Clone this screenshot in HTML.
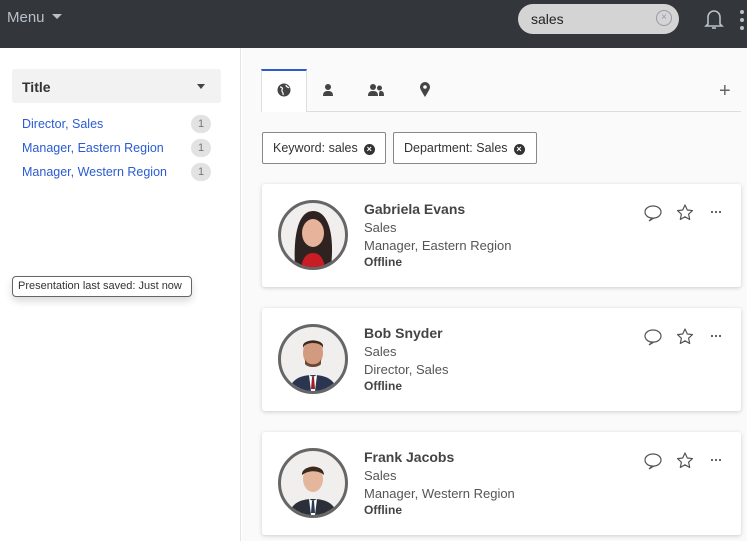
<!DOCTYPE html>
<html><head><style>
*{box-sizing:border-box;margin:0;padding:0}
body{width:747px;height:541px;overflow:hidden;background:#fff;font-family:"Liberation Sans","DejaVu Sans",sans-serif;position:relative;color:#444}
.hdr{position:absolute;left:0;top:0;width:747px;height:48px;background:#33373c}
.menu{position:absolute;left:7px;top:9px;color:#b8c0c8;font-size:15px}
.menu:after{content:"";display:inline-block;margin-left:7px;border:5px solid transparent;border-top:5px solid #b8c0c8;border-bottom:0;vertical-align:3px}
.search{position:absolute;left:518px;top:4px;width:161px;height:30px;border-radius:15px;background:#d4d4d4;font-size:14px;color:#222;padding:7px 0 0 13px}
.xc{position:absolute;right:7px;top:6px;width:16px;height:16px;border-radius:50%;border:1.5px solid #99a;color:#99a;font-size:10px;line-height:13px;text-align:center}
.left{position:absolute;left:0;top:48px;width:241px;height:493px;border-right:1px solid #e4e4e4;background:#fff}
.right{position:absolute;left:242px;top:48px;width:505px;height:493px;background:#fafafa}
.ttl{position:absolute;left:12px;top:69px;width:209px;height:34px;background:#f2f2f2;border-radius:3px;font-size:14px;font-weight:bold;color:#333;padding:10px 10px}
.ttl:after{content:"";position:absolute;right:16px;top:15px;border:4.5px solid transparent;border-top:5px solid #444;border-bottom:0}
.fi{position:absolute;left:22px;font-size:12.5px;color:#2a5bd0}
.cnt{position:absolute;left:191px;width:20px;height:18px;border-radius:9px;background:#e2e2e2;color:#777;font-size:11px;text-align:center;line-height:18px}
.tip{position:absolute;left:12px;top:276px;width:180px;height:21px;border:1px solid #666;border-radius:4px;background:#fff;font-size:11px;color:#333;padding:3px 5px;box-shadow:0 4px 8px rgba(0,0,0,.15);white-space:nowrap}
.tabs{position:absolute;left:261px;top:111px;width:480px;border-top:1px solid #ddd}
.tab1{position:absolute;left:261px;top:69px;width:46px;height:43px;border-top:2px solid #2a5bd0;border-left:1px solid #ddd;border-right:1px solid #ddd;background:#fff}
.chip{position:absolute;top:132px;height:32px;border:1px solid #888;border-radius:2px;background:#fff;font-size:12.5px;color:#333;padding:8px 10px;white-space:nowrap}
.chip i{display:inline-block;width:11px;height:11px;border-radius:50%;background:#333;color:#fff;font-size:9px;line-height:11px;text-align:center;font-style:normal;font-weight:bold;margin-left:6px;vertical-align:0}
.card{position:absolute;left:262px;width:479px;height:103px;background:#fff;border-radius:3px;box-shadow:0 1px 4px rgba(0,0,0,.18)}
.av{position:absolute;left:16px;top:16px;width:70px;height:70px;border-radius:50%;border:3px solid #666;overflow:hidden;background:#f1eeee}
.nm{position:absolute;left:102px;top:17px;font-size:14px;font-weight:bold;color:#444}
.ln{position:absolute;left:102px;font-size:13px;color:#555}
.off{position:absolute;left:102px;top:71px;font-size:12px;font-weight:bold;color:#444}
.ic{position:absolute;top:20px}
</style></head><body>
<div class="hdr"><div class="menu">Menu</div>
<div class="search">sales<div class="xc">×</div></div>
<svg style="position:absolute;left:704px;top:8px" width="20" height="22" viewBox="0 0 20 22"><path d="M4 16V9a6 6 0 0 1 12 0v7l2 2H2z" fill="none" stroke="#b8c0c8" stroke-width="1.6"/><path d="M8 20h4" stroke="#b8c0c8" stroke-width="1.6"/></svg>
<div style="position:absolute;left:740px;top:10px;width:4px;height:4px;border-radius:2px;background:#b8c0c8;box-shadow:0 8px 0 #b8c0c8,0 16px 0 #b8c0c8"></div>
</div>
<div class="left"></div><div class="right"></div>
<div class="ttl">Title</div>
<div class="fi" style="top:117px">Director, Sales</div><div class="cnt" style="top:115px">1</div>
<div class="fi" style="top:141px">Manager, Eastern Region</div><div class="cnt" style="top:139px">1</div>
<div class="fi" style="top:165px">Manager, Western Region</div><div class="cnt" style="top:163px">1</div>
<div class="tip">Presentation last saved: Just now</div>
<div class="tabs"></div><div class="tab1"></div>
<svg style="position:absolute;left:277px;top:83px" width="14" height="14" viewBox="0 0 14 14"><circle cx="7" cy="7" r="6.5" fill="#444"/><path d="M3 4c2 0 3 1 2 3s2 2 1 5M9 2c0 2 2 2 3 3" stroke="#fff" stroke-width="1.2" fill="none"/></svg>
<svg style="position:absolute;left:322px;top:83px" width="12" height="14" viewBox="0 0 12 14"><circle cx="6" cy="4" r="3" fill="#444"/><path d="M1 13c0-4 2-5 5-5s5 1 5 5z" fill="#444"/></svg>
<svg style="position:absolute;left:367px;top:83px" width="18" height="14" viewBox="0 0 18 14"><circle cx="6" cy="4" r="3" fill="#444"/><path d="M1 13c0-4 2-5 5-5s5 1 5 5z" fill="#444"/><circle cx="12.5" cy="5" r="2.5" fill="#444"/><path d="M12 13c0-3 0-4 1-5 3 0 4 1 4 5z" fill="#444"/></svg>
<svg style="position:absolute;left:419px;top:81px" width="12" height="16" viewBox="0 0 12 16"><path d="M6 16C3 11 1 8 1 6a5 5 0 0 1 10 0c0 2-2 5-5 10z" fill="#444"/><circle cx="6" cy="6" r="1.8" fill="#fff"/></svg>
<div style="position:absolute;left:719px;top:80px;font-size:20px;color:#666;font-weight:300">+</div>
<div class="chip" style="left:262px;width:124px">Keyword: sales<i>×</i></div>
<div class="chip" style="left:393px;width:144px">Department: Sales<i>×</i></div>

<div class="card" style="top:184px">
<div class="av"><svg width="64" height="64" viewBox="0 0 64 64"><path d="M14 64C12 30 18 8 32 8s22 20 18 56z" fill="#2e2320"/><ellipse cx="32" cy="30" rx="11" ry="14" fill="#e7b49b"/><path d="M20 64c2-10 6-14 12-14s10 4 12 14z" fill="#c81d25"/></svg></div>
<div class="nm">Gabriela Evans</div><div class="ln" style="top:36px">Sales</div><div class="ln" style="top:54px">Manager, Eastern Region</div><div class="off">Offline</div>
</div>
<div class="card" style="top:308px">
<div class="av"><svg width="64" height="64" viewBox="0 0 64 64"><ellipse cx="32" cy="26" rx="10" ry="13" fill="#d29b7f"/><path d="M22 22c0-8 20-8 20 0v-4c-2-6-18-6-20 0z" fill="#3a2a20"/><path d="M24 32c2 7 14 7 16 0v5c-3 4-13 4-16 0z" fill="#6b4a35"/><path d="M8 64c2-12 12-16 24-16s22 4 24 16z" fill="#2a3550"/><path d="M28 48l4 2 4-2-2 16h-4z" fill="#fff"/><path d="M31 50h2l1 12h-4z" fill="#a01c2a"/></svg></div>
<div class="nm">Bob Snyder</div><div class="ln" style="top:36px">Sales</div><div class="ln" style="top:54px">Director, Sales</div><div class="off">Offline</div>
</div>
<div class="card" style="top:432px">
<div class="av"><svg width="64" height="64" viewBox="0 0 64 64"><ellipse cx="32" cy="28" rx="10" ry="13" fill="#e4b69c"/><path d="M21 24c-1-10 22-12 22 0-4-4-14-6-22 0z" fill="#3a2a20"/><path d="M8 64c2-12 12-16 24-16s22 4 24 16z" fill="#2a2f3a"/><path d="M28 48l4 2 4-2-2 16h-4z" fill="#fff"/><path d="M31 50h2l1 12h-4z" fill="#2a3a55"/></svg></div>
<div class="nm">Frank Jacobs</div><div class="ln" style="top:36px">Sales</div><div class="ln" style="top:54px">Manager, Western Region</div><div class="off">Offline</div>
</div>

<svg width="0" height="0" style="position:absolute"><defs>
<g id="acts"><path d="M391 2c-5 0-8 3-8 6s3 6 7 6l-3 3 5-3c4 0 7-3 7-6s-3-6-8-6z" fill="none" stroke="#555" stroke-width="1.2"/><path d="M423 1l2.3 5 5.2.6-3.9 3.6 1.1 5.3-4.7-2.7-4.7 2.7 1.1-5.3-3.9-3.6 5.2-.6z" fill="none" stroke="#555" stroke-width="1.2" stroke-linejoin="round"/><circle cx="450" cy="8" r="1.1" fill="#555"/><circle cx="454" cy="8" r="1.1" fill="#555"/><circle cx="458" cy="8" r="1.1" fill="#555"/></g></defs></svg>
<svg style="position:absolute;left:262px;top:204px" width="479" height="20"><use href="#acts"/></svg>
<svg style="position:absolute;left:262px;top:328px" width="479" height="20"><use href="#acts"/></svg>
<svg style="position:absolute;left:262px;top:452px" width="479" height="20"><use href="#acts"/></svg>
</body></html>
